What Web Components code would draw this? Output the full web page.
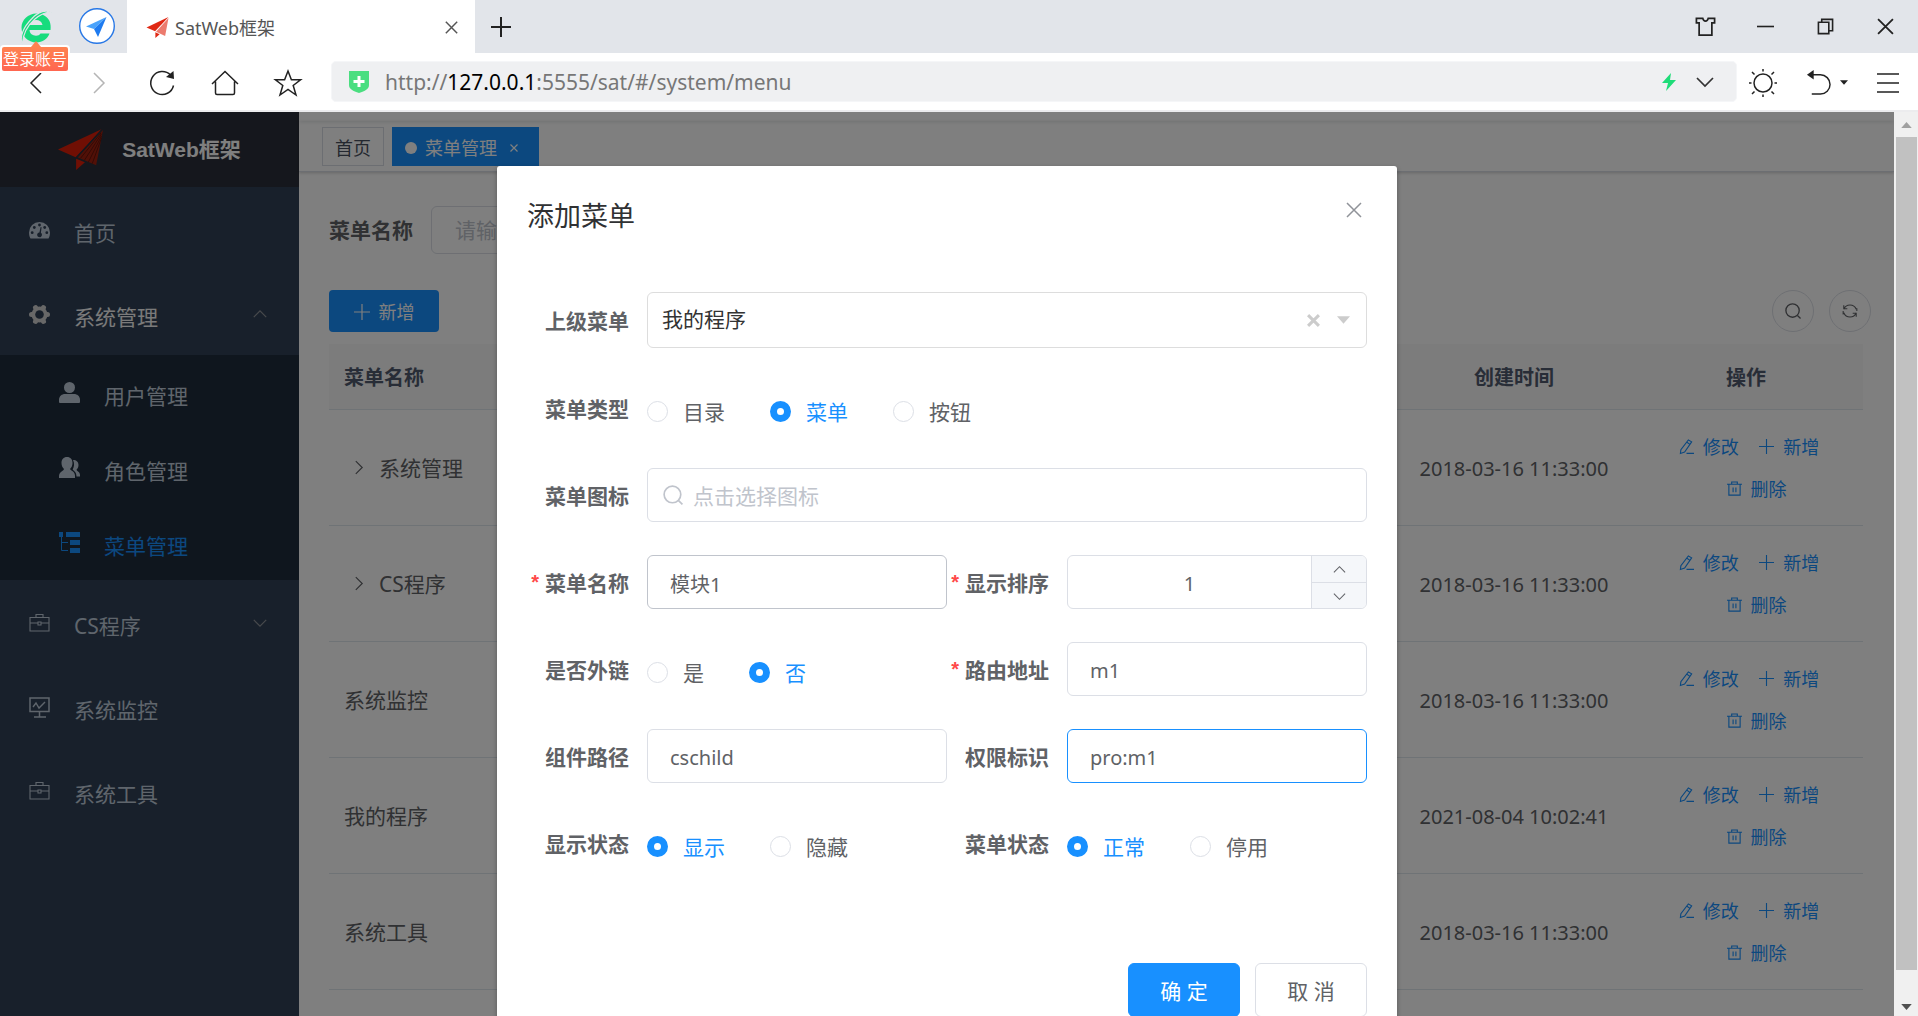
<!DOCTYPE html>
<html lang="zh-CN">
<head>
<meta charset="utf-8">
<title>SatWeb框架</title>
<style>
  html, body { margin: 0; height: 100%; overflow: hidden; }
  body { font-family: "Noto Sans", "Noto Sans CJK SC", sans-serif; font-size: 21px; color: #606266; background: #fff; }
</style>
</head>
<body>
<sat-window></sat-window>

<script>
const ICONS = {
  browser: ['0 0 34 36', '<g stroke="none" fill="#17dc7d"><path d="M30.500 12C28 7 23 4.500 17.500 4.500 9 4.500 2.500 11 2.500 18.500c0 8.500 6.500 15 15 15 6 0 11-3.500 13-9H21.500c-1 1.500-2.500 2.200-4.500 2.200-3.500 0-6.200-2-6.500-5.700H31.500c.4-3 .2-6-1-9zM10.800 16c.8-3.500 3.300-5 6.400-5s5.600 1.500 6.300 5z" fill-rule="evenodd"/><path d="M3.500 35.500C0 28 4.500 18 13 9.500 19.500 2.500 28 0 32.500 4 29 2.500 23 4.500 16 10 8.500 16.500 3.500 25 3.500 35.500z" stroke="#e2e5ea" stroke-width="1.200"/></g>'],
  compass: ['0 0 36 36', '<circle cx="18" cy="18" r="17.300" fill="#fff" stroke="#2878e6" stroke-width="1.400"/><path d="M27.500 9 7 18.500l8 2.500z" fill="#4aa3fb" stroke="none"/><path d="M27.500 9 15 21l4 8z" fill="#1e7bf0" stroke="none"/>'],
  plane: ['0 0 46 44', '<g stroke="none"><path d="M45 1 0 22l18 8z" fill="#e11f08"/><path d="M46 2 20 30l19 8z" fill="#a3210f"/><path d="M18.500 31.500V43l9-8z" fill="#e11f08"/></g><path d="m44 5-21 26M44.500 6 27 33M44.500 8 31 35M44.500 10 35 36.500" stroke="#571008" stroke-width=".8"/><path d="M45.500 1 19 30.500" stroke="#2b2f3a" stroke-width="1.200"/>'],
  planeTab: ['0 0 46 44', '<g stroke="none"><path d="M46 0 0 22l18 8z" fill="#e02813"/><path d="M46 2 20 31l19 9z" fill="#ec7b6e"/><path d="M18.500 32v12l9-8z" fill="#e02813"/></g>'],
  close: ['0 0 16 16', '<path d="m1 1 14 14M15 1 1 15"/>'],
  closeBold: ['0 0 12 12', '<path d="m1 1 10 10M11 1 1 11" stroke-width="2.800"/>'],
  plus: ['0 0 20 20', '<path d="M10 0v20M0 10h20"/>'],
  shirt: ['0 0 22 22', '<path d="M1 1.500h7c1 4 5 4 6 0h7v5h-3V20H4V6.500H1z" stroke-width="1.900"/>'],
  minus: ['0 0 18 18', '<path d="M0 9h18"/>'],
  restore: ['0 0 18 18', '<path d="M1.500 4.500h11v12h-11zM5 4V1.500h11.500v12H13"/>'],
  back: ['0 0 16 24', '<path d="M13 2 3 12l10 10"/>'],
  forward: ['0 0 16 24', '<path d="m3 2 10 10L3 22"/>'],
  reload: ['0 0 28 28', '<path d="M22.500 6A11.500 11.500 0 1 0 25.500 16.500"/><path d="m25.500 2 .5 8-8-2z" fill="currentColor" stroke="none"/>'],
  home: ['0 0 28 28', '<path d="M1 15 14 2.500 27 15M4.500 12.500V24q0 1.500 1.500 1.500h16q1.500 0 1.500-1.500V12.500"/>'],
  star: ['0 0 28 28', '<path d="m14 2 3.400 8.800h9.200l-7.400 5.700 2.800 9.500L14 20.500 6 26l2.800-9.500-7.400-5.700h9.200z"/>'],
  shield: ['0 0 22 24', '<path d="M1 1h20v14c0 4-4 6-10 8-6-2-10-4-10-8z" fill="#4ade80" stroke="none"/><path d="M11 6v11M5.500 11.500h11" stroke="#fff" stroke-width="3"/>'],
  bolt: ['0 0 16 18', '<path d="M10 0 1 10h6L5 18l10-11H9z" fill="#1edc78" stroke="none"/>'],
  down: ['0 0 18 10', '<path d="m1 1 8 8 8-8"/>'],
  up: ['0 0 18 10', '<path d="m1 9 8-8 8 8"/>'],
  right: ['0 0 10 18', '<path d="m1 1 8 8-8 8"/>'],
  sun: ['0 0 28 28', '<circle cx="14" cy="14" r="9"/><path d="M14 0v2.500M14 25.500V28M0 14h2.500M25.500 14H28M3 3l2.500 2.500M22.500 22.500 25 25M3 25l2.500-2.500M22.500 5.500 25 3"/>'],
  undo: ['0 0 26 26', '<path d="M6 5h9a10 10 0 0 1 0 20H6"/><path d="M8 0v10L1 5z" fill="currentColor" stroke="none"/>'],
  caret: ['0 0 14 8', '<path d="M0 0h14L7 8z" fill="currentColor" stroke="none"/>'],
  caretUp: ['0 0 14 8', '<path d="M0 8h14L7 0z" fill="currentColor" stroke="none"/>'],
  burger: ['0 0 22 22', '<path d="M0 2h22M0 11h22M0 20h22" stroke-width="1.500"/>'],
  gauge: ['0 0 21 21', '<path d="M10.500 2A10.500 10.500 0 0 0 0 12.500c0 2.500.6 4.500 1.500 6h18c.9-1.500 1.500-3.500 1.500-6A10.500 10.500 0 0 0 10.500 2z" fill="currentColor" stroke="none"/><g fill="var(--hole)" stroke="none"><circle cx="10.500" cy="5" r="1.400"/><circle cx="5.300" cy="7.500" r="1.400"/><circle cx="15.700" cy="7.500" r="1.400"/><circle cx="3.200" cy="12.700" r="1.400"/><circle cx="17.800" cy="12.700" r="1.400"/><path d="m11.600 7 1 .2-.7 5.600a2.400 2.400 0 1 1-1.500-.4z"/></g>'],
  gear: ['0 0 21 21', '<circle cx="10.500" cy="10.500" r="8" fill="currentColor" stroke="none"/><path d="M2.500 10.500h16M6.500 3.570l8 13.860M14.500 3.570l-8 13.860" stroke-width="5" stroke-linecap="round"/><circle cx="10.500" cy="10.500" r="4.300" fill="var(--hole)" stroke="none"/>'],
  user: ['0 0 21 21', '<circle cx="10.500" cy="5.500" r="5.500" fill="currentColor" stroke="none"/><path d="M0 20v-2c0-4 3-6 6-6h9c3 0 6 2 6 6v2q0 1-1 1H1q-1 0-1-1z" fill="currentColor" stroke="none"/>'],
  users: ['0 0 21 21', '<path d="M8 0c3.500 0 5.500 2.500 5.500 6 0 2.500-1 4.500-2.500 6 .5 1.500 5 2.500 5 6.500V21H0v-2c0-4 4.500-5 5-7-1.500-1.500-2.500-3.500-2.500-6C2.500 2.500 4.500 0 8 0z" fill="currentColor" stroke="none"/><path d="M14 3c3.500 0 5.500 2 5.500 5 0 2-.8 3.500-2 4.800.3 1.700 3.500 2 3.500 5.200v1.500h-3.500c0-4-2-5-3.800-7 1.500-3 2-6 .3-9.500z" fill="currentColor" stroke="none"/>'],
  tree: ['0 0 21 21', '<path d="M0 0h4v5H0zM7 0h14v5H7zM11 8h10v5H11zM11 16h10v5H11z" fill="currentColor" stroke="none"/><path d="M2.500 5v13.500H9M2.500 10.500H9" stroke-width="1"/>'],
  case: ['0 0 21 21', '<path d="M1 4.500h19V18H1zM1 10h8M12 10h8M7 4V1.500h7V4M9 9h3v3H9z" stroke-width="1.100"/>'],
  monitor: ['0 0 21 21', '<path d="M1 1h19v13.500H1zM10.500 15v5M5 20h12" stroke-width="1.500"/><path d="m4 10 3-4 3 5 6-6" stroke-width="1.400"/>'],
  search: ['0 0 18 18', '<circle cx="8.500" cy="8.500" r="7.500"/><path d="m14 14 3.500 3.500"/>'],
  refresh: ['0 0 18 18', '<path d="M2 7a7.500 7.500 0 0 1 14 0M16 11a7.500 7.500 0 0 1-14 0M16.700 9V6M1.300 9v4M2 2.500v4h4M16 15.500v-4h-4" stroke-width="1.200"/>'],
  edit: ['0 0 16 16', '<path d="M10 1l3.500 2L6 14l-4.500 1.500L2 11.500zM8.500 3.500 12 6M8 15.300h8" stroke-width="1.200"/>'],
  trash: ['0 0 16 16', '<path d="M0 3.500h16M5 3V1h6v2M2 4v11h12V4M6.500 7v5M9.500 7v5" stroke-width="1.200"/>']
};

/* Base class: opens a shadow root and fills it with the subclass's markup. */
class SatElement extends HTMLElement {
  connectedCallback() {
    if (this.shadowRoot) return;
    this.attachShadow({ mode: 'open' }).innerHTML =
      '<style>*{box-sizing:border-box}button,input,select{font:inherit;color:inherit;margin:0}button{padding:0;border:0;background:none;cursor:pointer}a{color:inherit;text-decoration:none}</style>' + this.render();
  }
  attr(name, fallback = '') { return this.getAttribute(name) ?? fallback; }
}

customElements.define('sat-icon', class extends SatElement {
  render() {
    const [box, body] = ICONS[this.attr('name')];
    return `<style>:host{display:inline-block;flex:none;width:21px;height:21px}svg{display:block;width:100%;height:100%;overflow:visible}</style>
    <svg viewBox="${box}" fill="none" stroke="currentColor" stroke-width="${this.attr('stroke', '1.5')}" aria-hidden="true">${body}</svg>`;
  }
});

customElements.define('browser-tabs', class extends SatElement {
  render() {
    return `<style>
      :host{display:flex;height:53px;background:#e2e5ea;color:#222}
      .account{position:relative;width:72px;display:flex;justify-content:center;padding-top:9px}
      .account>button:first-child{display:flex;align-items:flex-start}
      .account>button:first-child sat-icon{width:34px;height:36px}
      .tip{position:absolute;left:0;top:45px;z-index:2;border:2px solid #fff;border-radius:4px;background:linear-gradient(#ff8250,#ff6650);color:#fff;font-size:16px;line-height:24px;padding:0 1px;white-space:nowrap}
      .tip::before{content:"";position:absolute;left:29px;top:-6px;border:5px solid transparent;border-top:0;border-bottom:6px solid #ff8250}
      .pin{width:49px;display:flex;justify-content:center;padding-top:8px;margin-right:6px}
      .pin sat-icon{width:36px;height:36px}
      .tab{width:348px;background:#fff;display:flex;align-items:center;padding:2px 17px 0 19px;font-size:18px;color:#555}
      .tab>sat-icon{width:23px;height:21px;margin-right:6px}
      .tab span{flex:1;line-height:24px}
      .tab button{display:flex}.tab button sat-icon{width:13px;height:13px}
      .new{width:52px;display:flex;align-items:center;justify-content:center}
      .new sat-icon{width:20px;height:20px}
      .win{margin-left:auto;display:flex;padding-right:3px}
      .win button{width:60px;display:flex;align-items:center;justify-content:center}
      .win sat-icon{width:17px;height:17px}.win button:first-child sat-icon{width:21px;height:20px}
    </style>
    <div class="account"><button aria-label="browser"><sat-icon name="browser"></sat-icon></button><button class="tip">登录账号</button></div>
    <button class="pin" aria-label="compass"><sat-icon name="compass"></sat-icon></button>
    <div class="tab"><sat-icon name="planeTab"></sat-icon><span>SatWeb框架</span><button aria-label="close tab"><sat-icon name="close" stroke="1.8"></sat-icon></button></div>
    <button class="new" aria-label="new tab"><sat-icon name="plus" stroke="2"></sat-icon></button>
    <div class="win">${['shirt', 'minus', 'restore', 'close'].map(n => `<button aria-label="${n}"><sat-icon name="${n}" stroke="1.7"></sat-icon></button>`).join('')}</div>`;
  }
});

customElements.define('browser-toolbar', class extends SatElement {
  render() {
    return `<style>
      :host{display:flex;align-items:center;height:59px;background:#fff;border-bottom:2px solid #ececee;color:#222}
      nav{display:flex;padding-left:4px;width:331px}
      nav button,.tools button{display:flex;align-items:center;justify-content:center;height:40px;padding-top:2px}
      nav button{width:63px}
      sat-icon{width:28px;height:28px}
      .slim{width:16px;height:24px}
      .off{color:#b5b5b5}
      .bar{flex:1;height:41px;display:flex;align-items:center;background:#eff0f2;border:1px solid #f5f6f8;border-radius:5px;padding:0 22px 0 16px;font-size:21px;color:#777}
      .bar>sat-icon{width:22px;height:24px;margin-right:15px}
      .url{flex:1;line-height:30px}.url b{font-weight:400;color:#000}
      .bar button{display:flex;margin-left:19px;color:#333}
      .bar button sat-icon{width:16px;height:18px}.bar button:last-child sat-icon{width:18px}
      .tools{display:flex;width:181px}
      .tools button{width:52px}
      .tools .undo{width:75px;gap:9px}.undo sat-icon{width:25px;height:25px}.undo sat-icon+sat-icon{width:8px;height:5px}
      .tools button:last-child{width:48px}.tools button:last-child sat-icon{width:22px;height:22px}
    </style>
    <nav><button aria-label="back"><sat-icon class="slim" name="back"></sat-icon></button><button class="off" aria-label="forward"><sat-icon class="slim" name="forward"></sat-icon></button><button aria-label="reload"><sat-icon name="reload"></sat-icon></button><button aria-label="home"><sat-icon name="home"></sat-icon></button><button aria-label="bookmark"><sat-icon name="star"></sat-icon></button></nav>
    <div class="bar"><sat-icon name="shield"></sat-icon><span class="url">http://<b>127.0.0.1</b>:5555/sat/#/system/menu</span><button aria-label="boost"><sat-icon name="bolt"></sat-icon></button><button aria-label="history"><sat-icon name="down" stroke="1.7"></sat-icon></button></div>
    <div class="tools"><button aria-label="theme"><sat-icon name="sun"></sat-icon></button><button class="undo" aria-label="undo"><sat-icon name="undo"></sat-icon><sat-icon name="caret"></sat-icon></button><button aria-label="menu"><sat-icon name="burger"></sat-icon></button></div>`;
  }
});

customElements.define('side-item', class extends SatElement {
  render() {
    const arrow = this.attr('arrow');
    return `<style>
      :host{display:block;--hole:#304156;color:#bfcbd9}
      :host([open]){color:#f4f4f5}:host([sub]){--hole:#1f2d3d;background:#1f2d3d}:host([active]){color:#1890ff}
      :host([open]) a>sat-icon:first-child{color:#d0d0d0}
      a{display:flex;align-items:center;height:84px;padding:2px 32px 0 29px}
      :host([sub]) a{height:75px;padding:0 32px 0 59px}
      span{flex:1;margin-left:24px;line-height:30px;padding-top:6px}
      .arrow{width:14px;height:8px;color:#909399}
    </style>
    <a href="#"><sat-icon name="${this.attr('icon')}"></sat-icon><span><slot></slot></span>${arrow ? `<sat-icon class="arrow" name="${arrow}"></sat-icon>` : ''}</a>`;
  }
});

customElements.define('side-menu', class extends SatElement {
  render() {
    return `<style>
      :host{display:block;width:299px;flex:none;background:#304156}
      .logo{height:75px;background:#2b2f3a;display:flex;align-items:center;justify-content:center;gap:19px;color:#fff}
      .logo sat-icon{width:45px;height:43px}
      h1{margin:0;font:bold 21px/30px "Liberation Sans","Noto Sans CJK SC",sans-serif}
    </style>
    <a class="logo" href="#"><sat-icon name="plane"></sat-icon><h1>SatWeb框架</h1></a>
    <nav>
      <side-item icon="gauge">首页</side-item>
      <side-item icon="gear" arrow="up" open>系统管理</side-item>
      <side-item icon="user" sub>用户管理</side-item>
      <side-item icon="users" sub>角色管理</side-item>
      <side-item icon="tree" sub active>菜单管理</side-item>
      <side-item icon="case" arrow="down">CS程序</side-item>
      <side-item icon="monitor">系统监控</side-item>
      <side-item icon="case">系统工具</side-item>
    </nav>`;
  }
});

customElements.define('tags-view', class extends SatElement {
  render() {
    return `<style>
      :host{display:block}
      .nav{height:9px;box-shadow:0 1px 4px rgba(0,21,41,.12)}
      .tags{display:flex;gap:8px;height:51px;padding:6px 23px;border-bottom:1px solid #d8dce5;box-shadow:0 1px 3px rgba(0,0,0,.2)}
      a{display:flex;align-items:center;height:39px;padding:2px 12px 0;border:1px solid #d8dce5;font-size:18px;line-height:26px;color:#495060}
      .on{background:#1890ff;border-color:#1890ff;color:#fff;padding-right:20px}
      .on::before{content:"";width:12px;height:12px;border-radius:50%;background:#fff;margin-right:8px}
      .on sat-icon{width:8px;height:8px;margin-left:13px}
    </style>
    <div class="nav"></div><div class="tags"><a href="#">首页</a><a class="on" href="#">菜单管理<sat-icon name="close" stroke="2.4"></sat-icon></a></div>`;
  }
});

customElements.define('menu-table', class extends SatElement {
  render() {
    const rows = [['系统管理', '2018-03-16 11:33:00', 1], ['CS程序', '2018-03-16 11:33:00', 1], ['系统监控', '2018-03-16 11:33:00'], ['我的程序', '2021-08-04 10:02:41'], ['系统工具', '2018-03-16 11:33:00']];
    return `<style>
      :host{display:block}
      table{width:100%;border-collapse:separate;border-spacing:0;table-layout:fixed}
      th{height:66px;background:#f8f8f9;color:#515a6e;font-size:20px;line-height:28px;font-weight:700}
      td{height:116px;line-height:30px}
      th,td{padding:0 15px;border-bottom:1px solid #dfe6ec;text-align:center}
      th{padding-top:2px}
      th:first-child,td:first-child{text-align:left}
      td:nth-child(2){font-size:20px;white-space:nowrap;padding-top:2px}
      td:last-child{padding:0 12px 0 18px}
      .date{width:230px}.ops{width:234px}
      .name{display:flex;align-items:center}
      .expand{width:35px;padding-left:11px;display:flex}.expand sat-icon{width:8px;height:15px}
      .act{font-size:18px;line-height:42px;color:#1890ff;display:inline-flex;align-items:center;gap:9px;vertical-align:top}
      .act+.act{margin-left:15px}
      .act sat-icon{width:15px;height:15px}
    </style>
    <table><thead><tr><th>菜单名称</th><th class="date">创建时间</th><th class="ops">操作</th></tr></thead><tbody>
    ${rows.map(([name, date, kids]) => `<tr><td><div class="name">${kids ? '<button class="expand" aria-label="expand"><sat-icon name="right"></sat-icon></button>' : ''}<span>${name}</span></div></td><td>${date}</td><td>
      <button class="act"><sat-icon name="edit"></sat-icon>修改</button> <button class="act"><sat-icon name="plus"></sat-icon>新增</button> <button class="act"><sat-icon name="trash"></sat-icon>删除</button></td></tr>`).join('')}
    </tbody></table>`;
  }
});

customElements.define('menu-page', class extends SatElement {
  render() {
    return `<style>
      :host{display:block;flex:1;min-width:0;background:#fff}
      main{padding:34px 23px 0 30px}
      .query{display:flex;align-items:center;gap:18px;height:48px}
      .query label{font-weight:700;line-height:30px}
      .query input{width:360px;height:48px;border:1px solid #dcdfe6;border-radius:6px;padding:0 23px;background:#fff}
      input::placeholder{color:#c0c4cc;opacity:1}
      .bar{display:flex;align-items:center;gap:15px;margin:36px 0 12px}
      .add{display:flex;align-items:center;justify-content:center;gap:9px;width:110px;height:42px;border-radius:4px;background:#1890ff;color:#fff;font-size:18px;line-height:26px;margin-right:auto;padding-top:1px}
      .add sat-icon{width:16px;height:16px}
      .round{width:42px;height:42px;border:1px solid #dcdfe6;border-radius:50%;display:flex;align-items:center;justify-content:center}
      .round sat-icon{width:16px;height:16px}
      menu-table{margin-right:8px}
    </style>
    <tags-view></tags-view>
    <main>
      <div class="query"><label for="q">菜单名称</label><input id="q" type="text" placeholder="请输入菜单名称"></div>
      <div class="bar"><button class="add"><sat-icon name="plus"></sat-icon>新增</button><button class="round" aria-label="search"><sat-icon name="search"></sat-icon></button><button class="round" aria-label="refresh"><sat-icon name="refresh"></sat-icon></button></div>
      <menu-table></menu-table>
    </main>`;
  }
});

/* One row of the form. kind: text, select, search, number or radio. */
customElements.define('form-field', class extends SatElement {
  render() {
    const kind = this.attr('kind', 'text'), label = this.attr('label'), value = this.attr('value');
    let control;
    if (kind === 'radio') {
      control = `<div class="radios" role="radiogroup" aria-labelledby="l">${this.attr('options').split(',').map(o => `<label><input type="radio" name="r"${o === value ? ' checked' : ''}><span>${o}</span></label>`).join('')}</div>`;
    } else if (kind === 'select') {
      control = `<div class="box tall"><select id="c"><option>${value}</option></select><div class="marks"><sat-icon name="closeBold"></sat-icon><sat-icon name="caret"></sat-icon></div></div>`;
    } else if (kind === 'number') {
      control = `<div class="box num"><input id="c" type="text" inputmode="numeric" value="${value}"><div class="steps"><button aria-label="increase"><sat-icon name="up"></sat-icon></button><button aria-label="decrease"><sat-icon name="down"></sat-icon></button></div></div>`;
    } else {
      control = `<div class="box">${kind === 'search' ? '<sat-icon class="lens" name="search"></sat-icon>' : ''}<input id="c" type="text" value="${value}" placeholder="${this.attr('placeholder')}"></div>`;
    }
    const title = kind === 'radio' ? `<span id="l" class="title">${label}</span>` : `<label for="c" class="title">${label}</label>`;
    return `<style>
      :host{display:flex;align-items:center;min-width:0;color:#606266}
      .title{flex:none;width:120px;padding:1px 18px 0 0;text-align:right;font-weight:700;line-height:30px;white-space:nowrap}
      :host([required]) .title::before{content:"*";color:#ff4949;margin-right:6px;font:bold 20px/28px "Liberation Sans",sans-serif;vertical-align:2px}
      .box{flex:1;min-width:0;height:54px;display:flex;align-items:center;border:1px solid #dcdfe6;border-radius:6px;background:#fff}
      :host([hover]) .box{border-color:#c0c4cc}:host([focused]) .box{border-color:#1890ff}
      .tall{height:56px;border-color:#ddd;padding:0 16px 0 14px}
      input:not([type=radio]),select{flex:1;min-width:0;height:100%;border:0;outline:0;background:none;padding:3px 22px 0;font-size:20px}
      select{appearance:none;padding:0 0 2px;font-size:21px;color:#333}
      input::placeholder{color:#c0c4cc;opacity:1;font-size:21px}
      .lens{width:20px;height:20px;margin-left:15px;color:#c0c4cc}.lens+input{padding-left:10px!important}
      .marks{display:flex;align-items:center;gap:17px;color:#ccc}.marks sat-icon{width:13px;height:13px}.marks sat-icon+sat-icon{height:8px}
      .num input{text-align:center}
      .steps{width:55px;height:100%;border-left:1px solid #dcdfe6;display:flex;flex-direction:column;background:#f5f7fa;border-radius:0 5px 5px 0}
      .steps button{flex:1;display:flex;align-items:center;justify-content:center;padding-top:2px}
      .steps button+button{border-top:1px solid #dcdfe6}
      .steps sat-icon{width:13px;height:7px}
      .radios{display:flex;gap:45px;height:54px;align-items:center;padding-top:7px}
      .radios label{display:flex;align-items:center;gap:15px;line-height:30px}
      .radios input{appearance:none;width:21px;height:21px;border:1px solid #dcdfe6;border-radius:50%;background:#fff}
      .radios input:checked{border:7px solid #1890ff}
      .radios input:checked+span{color:#1890ff}
    </style>${title}${control}`;
  }
});

customElements.define('menu-dialog', class extends SatElement {
  render() {
    return `<style>
      :host{display:block;width:900px;max-width:100%;margin:54px auto 0;background:#fff;border-radius:3px;box-shadow:0 2px 5px rgba(0,0,0,.3);color:#606266}
      header{display:flex;align-items:flex-start;justify-content:space-between;padding:30px 35px 15px 30px}
      h2{margin:0;font-size:27px;line-height:40px;font-weight:400;color:#303133}
      header button{color:#909399;display:flex;padding-top:6px}header sat-icon{width:16px;height:16px}
      form{display:grid;grid-template-columns:1fr 1fr;row-gap:33px;padding:41px 30px 0}
      .wide{grid-column:1/-1}
      footer{display:flex;justify-content:flex-end;gap:15px;padding:93px 30px 30px}
      footer button{width:112px;height:54px;border:1px solid #dcdfe6;border-radius:6px;background:#fff;font-size:21px;line-height:30px;padding-top:2px}
      footer .ok{background:#1890ff;border-color:#1890ff;color:#fff}
    </style>
    <header><h2>添加菜单</h2><button aria-label="close"><sat-icon name="close"></sat-icon></button></header>
    <form>
      <form-field class="wide" kind="select" label="上级菜单" value="我的程序"></form-field>
      <form-field class="wide" kind="radio" label="菜单类型" options="目录,菜单,按钮" value="菜单"></form-field>
      <form-field class="wide" kind="search" label="菜单图标" placeholder="点击选择图标"></form-field>
      <form-field label="菜单名称" value="模块1" required hover></form-field>
      <form-field kind="number" label="显示排序" value="1" required></form-field>
      <form-field kind="radio" label="是否外链" options="是,否" value="否"></form-field>
      <form-field label="路由地址" value="m1" required></form-field>
      <form-field label="组件路径" value="cschild"></form-field>
      <form-field label="权限标识" value="pro:m1" focused></form-field>
      <form-field kind="radio" label="显示状态" options="显示,隐藏" value="显示"></form-field>
      <form-field kind="radio" label="菜单状态" options="正常,停用" value="正常"></form-field>
    </form>
    <footer><button class="ok">确 定</button><button>取 消</button></footer>`;
  }
});

customElements.define('scroll-rail', class extends SatElement {
  render() {
    return `<style>
      :host{display:flex;flex-direction:column;width:24px;flex:none;background:#f0f0f0;padding:0 1px 0 2px}
      div{display:flex;justify-content:center;align-items:center;height:25px;color:#a0a0a0}
      sat-icon{width:11px;height:6px}
      i{flex:1;background:#c1c1c1;margin-bottom:27px}
      div:last-child{height:19px;color:#505050}
    </style><div><sat-icon name="caretUp"></sat-icon></div><i></i><div><sat-icon name="caret"></sat-icon></div>`;
  }
});

customElements.define('sat-window', class extends SatElement {
  render() {
    return `<style>
      :host{display:flex;flex-direction:column;height:100vh;overflow:hidden}
      .page{flex:1;min-height:0;display:flex}
      .view{position:relative;flex:1;min-width:0;display:flex;overflow:hidden}
      .mask{position:absolute;inset:0;background:rgba(0,0,0,.5);overflow:hidden;display:flow-root}
    </style>
    <browser-tabs></browser-tabs><browser-toolbar></browser-toolbar>
    <div class="page"><div class="view"><side-menu></side-menu><menu-page></menu-page><div class="mask"><menu-dialog></menu-dialog></div></div><scroll-rail></scroll-rail></div>`;
  }
});
</script>
</body>
</html>
